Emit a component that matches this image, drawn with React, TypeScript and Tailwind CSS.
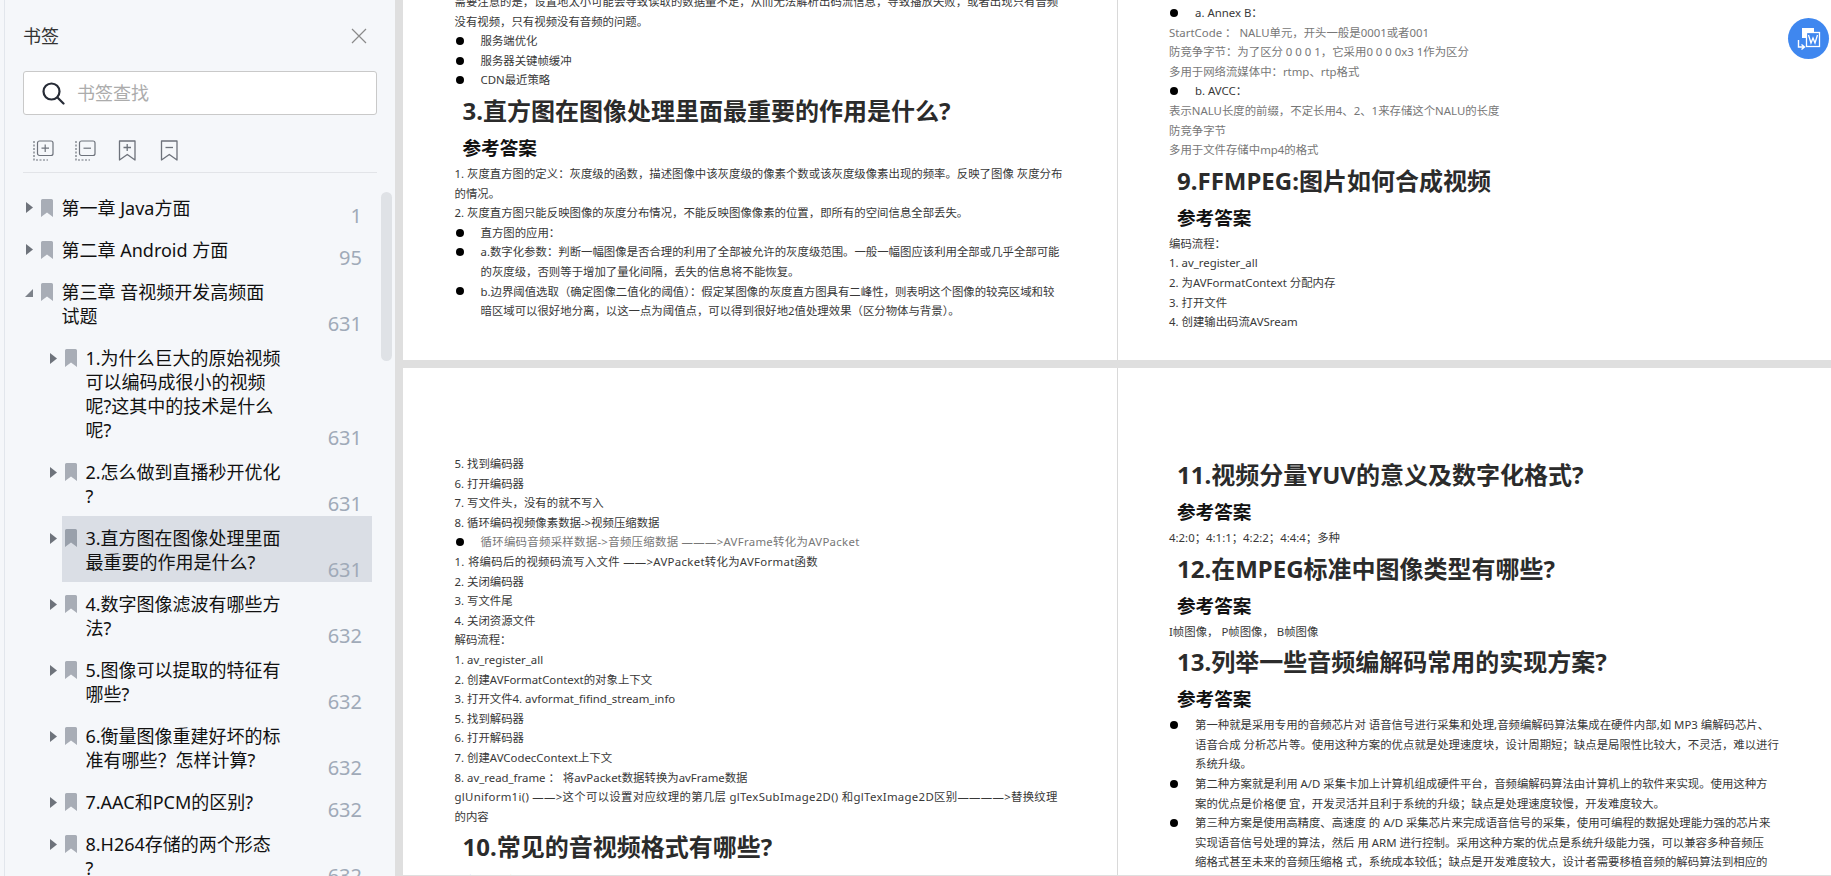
const rows = [
  { level: 1, lines: ['第一章 Java方面'], page: '1', open: false },
  { level: 1, lines: ['第二章 Android 方面'], page: '95', open: false },
  { level: 1, lines: ['第三章 音视频开发高频面', '试题'], page: '631', open: true },
  { level: 2, lines: ['1.为什么巨大的原始视频', '可以编码成很小的视频', '呢?这其中的技术是什么', '呢?'], page: '631' },
  { level: 2, lines: ['2.怎么做到直播秒开优化', '?'], page: '631' },
  { level: 2, lines: ['3.直方图在图像处理里面', '最重要的作用是什么?'], page: '631', active: true },
  { level: 2, lines: ['4.数字图像滤波有哪些方', '法?'], page: '632' },
  { level: 2, lines: ['5.图像可以提取的特征有', '哪些?'], page: '632' },
  { level: 2, lines: ['6.衡量图像重建好坏的标', '准有哪些？怎样计算?'], page: '632' },
  { level: 2, lines: ['7.AAC和PCM的区别?'], page: '632' },
  { level: 2, lines: ['8.H264存储的两个形态', '?'], page: '632' },
];

function Line({ children, gray, wide }: { children: string; gray?: boolean; wide?: boolean }) {
  return (
    <div
      className={`h-[19.6px] whitespace-nowrap text-[11.4px] leading-[19.6px] ${gray ? 'text-[#777]' : 'text-[#383838]'} ${wide ? 'tracking-[0.3px]' : ''}`}
    >
      {children}
    </div>
  );
}

function Bullet({ children, gray, wide }: { children: string; gray?: boolean; wide?: boolean }) {
  return (
    <div className="flex items-center">
      <span className="ml-px h-2 w-2 shrink-0 rounded-full bg-black" />
      <div className="ml-[17px]">
        <Line gray={gray} wide={wide}>
          {children}
        </Line>
      </div>
    </div>
  );
}

function More({ children }: { children: string }) {
  return (
    <div className="pl-[26px]">
      <Line>{children}</Line>
    </div>
  );
}

function Heading({ children }: { children: string }) {
  return (
    <h2 className="ml-2 h-[42px] whitespace-nowrap text-[24px] font-bold leading-[42px] text-[#2b2b2b]">{children}</h2>
  );
}

function Answer() {
  return <h3 className="ml-2 h-8 text-[18.6px] font-bold leading-8 text-[#111]">参考答案</h3>;
}

function Toolbar() {
  return (
    <div className="mt-[25px] flex h-[21px] gap-[21px] pl-2.5">
      <svg width="21" height="21" viewBox="0 0 21 21" fill="none" stroke="#6d727b" strokeWidth="1.2">
        <path d="M1 1v19h14" strokeDasharray="2 1.5" />
        <rect x="4.5" y="1" width="15.5" height="14.5" rx="2" fill="#f5f7fa" />
        <path d="M8.5 8.2h7.5M12.2 4.5v7.500" />
      </svg>
      <svg width="21" height="21" viewBox="0 0 21 21" fill="none" stroke="#6d727b" strokeWidth="1.2">
        <path d="M1 1v19h14" strokeDasharray="2 1.5" />
        <rect x="4.5" y="1" width="15.5" height="14.5" rx="2" fill="#f5f7fa" />
        <path d="M8.5 8.2h7.500" />
      </svg>
      <svg width="21" height="21" viewBox="0 0 21 21" fill="none" stroke="#6d727b" strokeWidth="1.3">
        <path d="M2.5 1h15.500v19l-7.700-5.500L2.500 20z" strokeLinejoin="round" />
        <path d="M6.500 7.500h7.500M10.200 4v7" />
      </svg>
      <svg width="21" height="21" viewBox="0 0 21 21" fill="none" stroke="#6d727b" strokeWidth="1.3">
        <path d="M2.500 1h15.500v19l-7.700-5.500L2.500 20z" strokeLinejoin="round" />
        <path d="M6.500 7.500h7.500" />
      </svg>
    </div>
  );
}

function Row({ row }: { row: (typeof rows)[number] }) {
  return (
    <div className={`flex pr-[23px] ${row.level === 1 ? 'pl-[21px]' : 'pl-[45px]'}`}>
      <div className={`w-3 shrink-0 ${row.level === 1 ? 'pt-4' : 'pt-[17px]'}`}>
        {row.open ? (
          <svg width="8" height="11" viewBox="0 0 8 11" fill="#7d828a" className="-ml-px">
            <path d="M8 3v8H0z" />
          </svg>
        ) : (
          <svg width="7" height="11" viewBox="0 0 7 11" fill="#6e737b">
            <path d="M0 0l7 5.500L0 11z" />
          </svg>
        )}
      </div>
      <div className={`flex flex-1 pb-2 pl-[3px] pt-2.5 ${row.active ? 'bg-[#dadee5]' : ''}`}>
        <svg width="12" height="18" viewBox="0 0 12 18" fill={row.active ? '#99a0ab' : '#a8adb6'} className="mt-[3px] shrink-0">
          <path d="M1.500 0h9A1.500 1.500 0 0 1 12 1.500V18l-6-4.500L0 18V1.500A1.500 1.500 0 0 1 1.500 0z" />
        </svg>
        <div className="ml-[8.5px] text-[18px] leading-6 text-[#111]">
          {row.lines.map((l) => (
            <div key={l} className="whitespace-nowrap">
              {l}
            </div>
          ))}
        </div>
        <div className="mb-[-8px] flex-1 self-end pr-2.5 text-right text-[20px] leading-6 text-[#a0aab8]">{row.page}</div>
      </div>
    </div>
  );
}

export default function App() {
  return (
    <div className="relative flex h-[876px] overflow-hidden bg-[#dfdfdf] font-['Noto_Sans','Noto_Sans_CJK_SC',sans-serif]">
      <aside className="relative h-full w-[395px] shrink-0 overflow-hidden bg-[#f5f7fa] pl-1">
        <div className="h-full border-l border-[#e2e6ec]">
          <div className="px-[18px] pt-6">
            <div className="flex h-6 items-center justify-between">
              <span className="text-[18px] text-[#333]">书签</span>
              <svg width="16" height="16" viewBox="0 0 16 16" stroke="#8a8a8a" strokeWidth="1.2" className="mr-2.5">
                <path d="M1 1l14 14M15 1L1 15" />
              </svg>
            </div>
            <div className="mt-[23px] flex h-[44px] items-center rounded-[3px] border border-[#c9c9c9] bg-white pl-[18px]">
              <svg width="23" height="23" viewBox="0 0 23 23" fill="none" stroke="#262b36" strokeWidth="2.2">
                <circle cx="9.500" cy="9.500" r="8" />
                <path d="M15.500 15.500l6 6" strokeLinecap="round" />
              </svg>
              <span className="ml-3 text-[18px] text-[#acacac]">书签查找</span>
            </div>
            <Toolbar />
            <div className="mt-[11px] h-px bg-[#e2e4e8]" />
          </div>
          <div className="mt-[13px]">
            {rows.map((r) => (
              <Row key={r.lines[0]} row={r} />
            ))}
          </div>
        </div>
        <div className="absolute left-[381px] top-[192px] h-[169px] w-[11px] rounded-full bg-[#dfe2e6]" />
      </aside>

      <main className="ml-2 grid flex-1 grid-cols-[715px_1fr] grid-rows-[360px_1fr] gap-y-2 pb-px">
        <section className="overflow-hidden border-r border-[#d9d9d9] bg-white pl-[51.5px]">
          <div className="-mt-2">
            <Line>需要注意的是，设置地太小可能会导致读取的数据量不足，从而无法解析出码流信息，导致播放失败，或者出现只有音频</Line>
            <Line>没有视频，只有视频没有音频的问题。</Line>
            <Bullet>服务端优化</Bullet>
            <Bullet>服务器关键帧缓冲</Bullet>
            <Bullet>CDN最近策略</Bullet>
            <Heading>3.直方图在图像处理里面最重要的作用是什么?</Heading>
            <Answer />
            <Line>1. 灰度直方图的定义：灰度级的函数，描述图像中该灰度级的像素个数或该灰度级像素出现的频率。反映了图像 灰度分布</Line>
            <Line>的情况。</Line>
            <Line>2. 灰度直方图只能反映图像的灰度分布情况，不能反映图像像素的位置，即所有的空间信息全部丢失。</Line>
            <Bullet>直方图的应用：</Bullet>
            <Bullet>a.数字化参数：判断一幅图像是否合理的利用了全部被允许的灰度级范围。一般一幅图应该利用全部或几乎全部可能</Bullet>
            <More>的灰度级，否则等于增加了量化间隔，丢失的信息将不能恢复。</More>
            <Bullet>b.边界阈值选取（确定图像二值化的阈值）：假定某图像的灰度直方图具有二峰性，则表明这个图像的较亮区域和较</Bullet>
            <More>暗区域可以很好地分离，以这一点为阈值点，可以得到很好地2值处理效果（区分物体与背景）。</More>
          </div>
        </section>

        <section className="overflow-hidden bg-white pl-[51px] pt-[3px]">
          <Bullet>a. Annex B：</Bullet>
          <Line gray>StartCode ： NALU单元，开头一般是0001或者001</Line>
          <Line gray>防竞争字节：为了区分 0 0 0 1，它采用0 0 0 0x3 1作为区分</Line>
          <Line gray>多用于网络流媒体中：rtmp、rtp格式</Line>
          <Bullet>b. AVCC：</Bullet>
          <Line gray>表示NALU长度的前缀，不定长用4、2、1来存储这个NALU的长度</Line>
          <Line gray>防竞争字节</Line>
          <Line gray>多用于文件存储中mp4的格式</Line>
          <Heading>9.FFMPEG:图片如何合成视频</Heading>
          <Answer />
          <Line>编码流程：</Line>
          <Line>1. av_register_all</Line>
          <Line>2. 为AVFormatContext 分配内存</Line>
          <Line>3. 打开文件</Line>
          <Line>4. 创建输出码流AVSream</Line>
        </section>

        <section className="overflow-hidden border-r border-[#d9d9d9] bg-white pl-[51.5px] pt-[86px]">
          <Line>5. 找到编码器</Line>
          <Line>6. 打开编码器</Line>
          <Line>7. 写文件头，没有的就不写入</Line>
          <Line>8. 循环编码视频像素数据-&gt;视频压缩数据</Line>
          <Bullet gray wide>循环编码音频采样数据-&gt;音频压缩数据 ———&gt;AVFrame转化为AVPacket</Bullet>
          <Line wide>1. 将编码后的视频码流写入文件 ——&gt;AVPacket转化为AVFormat函数</Line>
          <Line>2. 关闭编码器</Line>
          <Line>3. 写文件尾</Line>
          <Line>4. 关闭资源文件</Line>
          <Line>解码流程：</Line>
          <Line>1. av_register_all</Line>
          <Line>2. 创建AVFormatContext的对象上下文</Line>
          <Line>3. 打开文件4. avformat_fifind_stream_info</Line>
          <Line>5. 找到解码器</Line>
          <Line>6. 打开解码器</Line>
          <Line>7. 创建AVCodecContext上下文</Line>
          <Line>8. av_read_frame ： 将avPacket数据转换为avFrame数据</Line>
          <Line wide>glUniform1i() ——&gt;这个可以设置对应纹理的第几层 glTexSubImage2D() 和glTexImage2D区别————&gt;替换纹理</Line>
          <Line>的内容</Line>
          <Heading>10.常见的音视频格式有哪些?</Heading>
          <Answer />
        </section>

        <section className="overflow-hidden bg-white pl-[51px] pt-[86px]">
          <Heading>11.视频分量YUV的意义及数字化格式?</Heading>
          <Answer />
          <Line>4:2:0；4:1:1；4:2:2；4:4:4；多种</Line>
          <Heading>12.在MPEG标准中图像类型有哪些?</Heading>
          <Answer />
          <Line>I帧图像， P帧图像， B帧图像</Line>
          <Heading>13.列举一些音频编解码常用的实现方案?</Heading>
          <Answer />
          <Bullet>第一种就是采用专用的音频芯片对 语音信号进行采集和处理,音频编解码算法集成在硬件内部,如 MP3 编解码芯片、</Bullet>
          <More>语音合成 分析芯片等。使用这种方案的优点就是处理速度块，设计周期短；缺点是局限性比较大，不灵活，难以进行</More>
          <More>系统升级。</More>
          <Bullet>第二种方案就是利用 A/D 采集卡加上计算机组成硬件平台，音频编解码算法由计算机上的软件来实现。使用这种方</Bullet>
          <More>案的优点是价格便 宜，开发灵活并且利于系统的升级；缺点是处理速度较慢，开发难度较大。</More>
          <Bullet>第三种方案是使用高精度、高速度 的 A/D 采集芯片来完成语音信号的采集，使用可编程的数据处理能力强的芯片来</Bullet>
          <More>实现语音信号处理的算法，然后 用 ARM 进行控制。采用这种方案的优点是系统升级能力强，可以兼容多种音频压</More>
          <More>缩格式甚至未来的音频压缩格 式，系统成本较低；缺点是开发难度较大，设计者需要移植音频的解码算法到相应的</More>
        </section>
      </main>

      <button className="absolute left-[1788px] top-[18px] flex h-[41px] w-[41px] items-center justify-center rounded-full bg-[#3f87ef]">
        <svg width="26" height="26" viewBox="0 0 26 26" fill="none">
          <path d="M6 2h12v4H10v6H6z" fill="#fff" />
          <rect x="10.500" y="6.500" width="13" height="14" fill="#3f87ef" stroke="#fff" strokeWidth="1.300" />
          <path d="M12.500 9l2.500 8 2-5 2 5 2.500-8" stroke="#fff" strokeWidth="1.300" />
          <path d="M2.500 14v7h5M5.500 18.500l3 2.500-3 2.500" stroke="#fff" strokeWidth="1.400" />
        </svg>
      </button>
    </div>
  );
}
